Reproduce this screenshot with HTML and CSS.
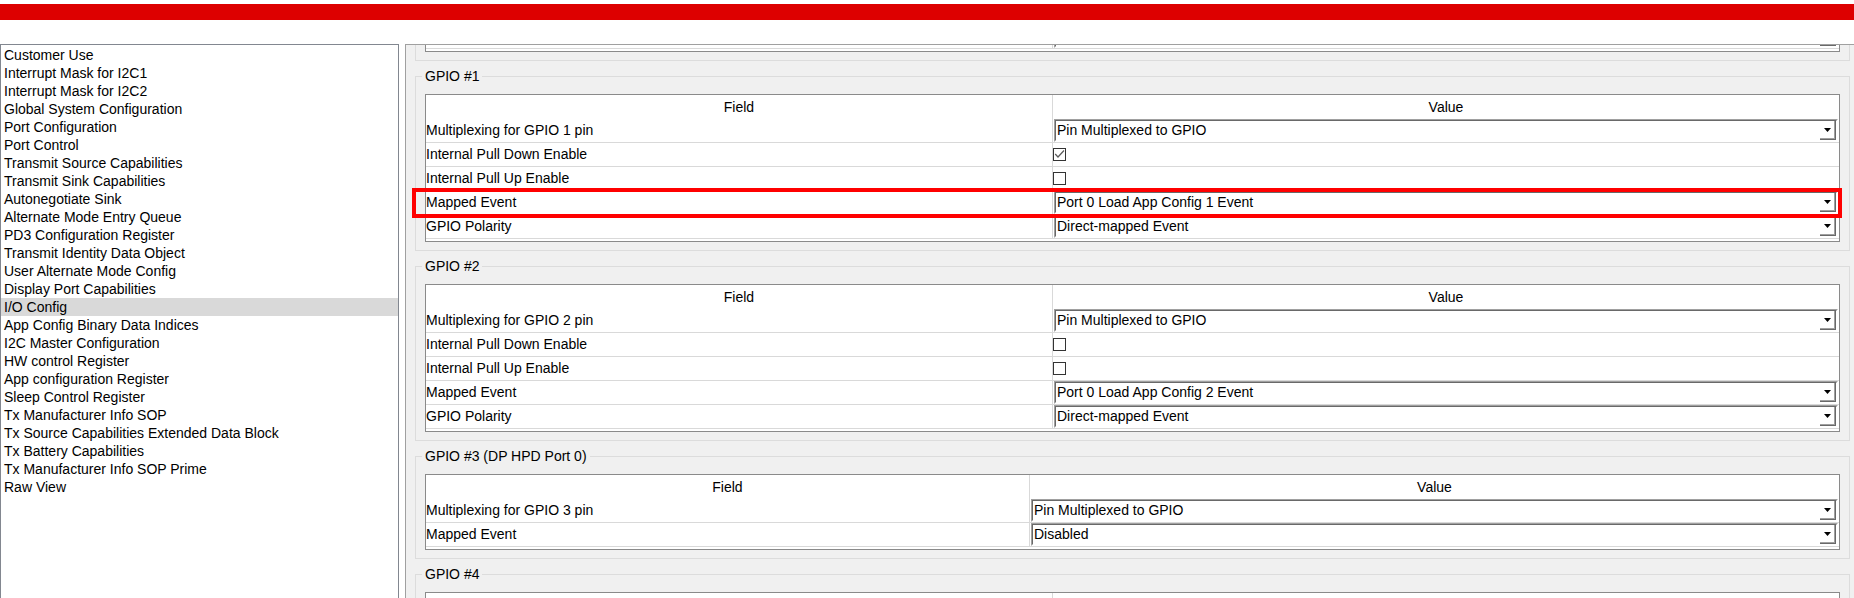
FILE: index.html
```html
<!DOCTYPE html>
<html>
<head>
<meta charset="utf-8">
<link rel="stylesheet" href="styles.css">
</head>
<body>
<div class="topbar"></div>
<div class="main">
  <div class="list">
    <div class="item">Customer Use</div>
    <div class="item">Interrupt Mask for I2C1</div>
    <div class="item">Interrupt Mask for I2C2</div>
    <div class="item">Global System Configuration</div>
    <div class="item">Port Configuration</div>
    <div class="item">Port Control</div>
    <div class="item">Transmit Source Capabilities</div>
    <div class="item">Transmit Sink Capabilities</div>
    <div class="item">Autonegotiate Sink</div>
    <div class="item">Alternate Mode Entry Queue</div>
    <div class="item">PD3 Configuration Register</div>
    <div class="item">Transmit Identity Data Object</div>
    <div class="item">User Alternate Mode Config</div>
    <div class="item">Display Port Capabilities</div>
    <div class="item selected">I/O Config</div>
    <div class="item">App Config Binary Data Indices</div>
    <div class="item">I2C Master Configuration</div>
    <div class="item">HW control Register</div>
    <div class="item">App configuration Register</div>
    <div class="item">Sleep Control Register</div>
    <div class="item">Tx Manufacturer Info SOP</div>
    <div class="item">Tx Source Capabilities Extended Data Block</div>
    <div class="item">Tx Battery Capabilities</div>
    <div class="item">Tx Manufacturer Info SOP Prime</div>
    <div class="item">Raw View</div>
  </div>
  <div class="panel">
    <div class="scroller">

      <div class="group partial">
        <div class="table">
          <div class="row"><div class="fcell"></div><div class="vcell"><div class="combo"><div class="combo-in"><span class="combo-text"></span><span class="combo-btn"><svg width="7" height="4" viewBox="0 0 7 4"><path d="M0 0H7L3.5 4Z" fill="#000"/></svg></span></div></div></div></div>
        </div>
      </div>

      <div class="group">
        <span class="legend">GPIO #1</span>
        <div class="table">
          <div class="row head"><div class="fcell">Field</div><div class="vcell">Value</div></div>
          <div class="row"><div class="fcell">Multiplexing for GPIO 1 pin</div><div class="vcell"><div class="combo"><div class="combo-in"><span class="combo-text">Pin Multiplexed to GPIO</span><span class="combo-btn"><svg width="7" height="4" viewBox="0 0 7 4"><path d="M0 0H7L3.5 4Z" fill="#000"/></svg></span></div></div></div></div>
          <div class="row"><div class="fcell">Internal Pull Down Enable</div><div class="vcell"><div class="check"><svg width="11" height="11" viewBox="0 0 11 11"><path d="M1.2 5 L4 8 L10 1.5" fill="none" stroke="#5a5a5a" stroke-width="1.2"/></svg></div></div></div>
          <div class="row"><div class="fcell">Internal Pull Up Enable</div><div class="vcell"><div class="check"></div></div></div>
          <div class="row"><div class="fcell">Mapped Event</div><div class="vcell"><div class="combo"><div class="combo-in"><span class="combo-text">Port 0 Load App Config 1 Event</span><span class="combo-btn"><svg width="7" height="4" viewBox="0 0 7 4"><path d="M0 0H7L3.5 4Z" fill="#000"/></svg></span></div></div></div><div class="highlight"></div></div>
          <div class="row"><div class="fcell">GPIO Polarity</div><div class="vcell"><div class="combo"><div class="combo-in"><span class="combo-text">Direct-mapped Event</span><span class="combo-btn"><svg width="7" height="4" viewBox="0 0 7 4"><path d="M0 0H7L3.5 4Z" fill="#000"/></svg></span></div></div></div></div>
        </div>
      </div>

      <div class="group">
        <span class="legend">GPIO #2</span>
        <div class="table">
          <div class="row head"><div class="fcell">Field</div><div class="vcell">Value</div></div>
          <div class="row"><div class="fcell">Multiplexing for GPIO 2 pin</div><div class="vcell"><div class="combo"><div class="combo-in"><span class="combo-text">Pin Multiplexed to GPIO</span><span class="combo-btn"><svg width="7" height="4" viewBox="0 0 7 4"><path d="M0 0H7L3.5 4Z" fill="#000"/></svg></span></div></div></div></div>
          <div class="row"><div class="fcell">Internal Pull Down Enable</div><div class="vcell"><div class="check"></div></div></div>
          <div class="row"><div class="fcell">Internal Pull Up Enable</div><div class="vcell"><div class="check"></div></div></div>
          <div class="row"><div class="fcell">Mapped Event</div><div class="vcell"><div class="combo"><div class="combo-in"><span class="combo-text">Port 0 Load App Config 2 Event</span><span class="combo-btn"><svg width="7" height="4" viewBox="0 0 7 4"><path d="M0 0H7L3.5 4Z" fill="#000"/></svg></span></div></div></div></div>
          <div class="row"><div class="fcell">GPIO Polarity</div><div class="vcell"><div class="combo"><div class="combo-in"><span class="combo-text">Direct-mapped Event</span><span class="combo-btn"><svg width="7" height="4" viewBox="0 0 7 4"><path d="M0 0H7L3.5 4Z" fill="#000"/></svg></span></div></div></div></div>
        </div>
      </div>

      <div class="group">
        <span class="legend">GPIO #3 (DP HPD Port 0)</span>
        <div class="table narrow">
          <div class="row head"><div class="fcell">Field</div><div class="vcell">Value</div></div>
          <div class="row"><div class="fcell">Multiplexing for GPIO 3 pin</div><div class="vcell"><div class="combo"><div class="combo-in"><span class="combo-text">Pin Multiplexed to GPIO</span><span class="combo-btn"><svg width="7" height="4" viewBox="0 0 7 4"><path d="M0 0H7L3.5 4Z" fill="#000"/></svg></span></div></div></div></div>
          <div class="row"><div class="fcell">Mapped Event</div><div class="vcell"><div class="combo"><div class="combo-in"><span class="combo-text">Disabled</span><span class="combo-btn"><svg width="7" height="4" viewBox="0 0 7 4"><path d="M0 0H7L3.5 4Z" fill="#000"/></svg></span></div></div></div></div>
        </div>
      </div>

      <div class="group">
        <span class="legend">GPIO #4</span>
        <div class="table">
          <div class="row head"><div class="fcell"></div><div class="vcell"></div></div>
        </div>
      </div>

    </div>
  </div>
</div>
</body>
</html>
```
FILE: styles.css
```css
html, body {
  margin: 0;
  padding: 0;
  background: #ffffff;
}
body {
  width: 1854px;
  height: 598px;
  overflow: hidden;
  font-family: "Liberation Sans", Arial, sans-serif;
  font-size: 14px;
  color: #000;
}
.topbar {
  height: 16px;
  margin-top: 4px;
  margin-bottom: 24px;
  background: #dd0000;
}
.main {
  display: flex;
  height: 554px;
  overflow: hidden;
}
.list {
  width: 399px;
  flex: none;
  box-sizing: border-box;
  border: 1px solid #828790;
  border-bottom: none;
  padding-top: 1px;
  background: #fff;
}
.item {
  height: 18px;
  line-height: 18px;
  padding-left: 3px;
  white-space: nowrap;
}
.item.selected {
  background: #d9d9d9;
}
.panel {
  flex: 1;
  margin-left: 6px;
  border-left: 1px solid #a0a0a0;
  border-top: 1px solid #a0a0a0;
  background: #f0f0f0;
  overflow: hidden;
}
.scroller {
  padding-left: 9px;
  padding-right: 4px;
}
.group {
  position: relative;
  border: 1px solid #dcdcdc;
  padding: 17px 9px 8px 9px;
  margin-bottom: 15px;
}
.group.partial {
  margin-top: -39px;
}
.legend {
  position: absolute;
  top: -9px;
  left: 6px;
  padding: 0 3px;
  line-height: 16px;
  background: #f0f0f0;
  white-space: nowrap;
}
.table {
  border: 1px solid #8a8a8a;
  background: #fff;
  padding-bottom: 2px;
}
.row {
  position: relative;
  display: flex;
  height: 24px;
  box-sizing: border-box;
  border-bottom: 1px solid #d9d9d9;
  line-height: 23px;
}
.row.head {
  border-bottom: none;
  line-height: 24px;
  text-align: center;
}
.fcell {
  width: 626px;
  flex: none;
  white-space: nowrap;
  overflow: hidden;
}
.table.narrow .fcell {
  width: 603px;
}
.vcell {
  flex: 1;
  min-width: 0;
  border-left: 1px solid #d9d9d9;
}
.combo {
  height: 23px;
  margin: 0 1px;
  box-sizing: border-box;
  border-top: 1px solid #a0a0a0;
  border-left: 1px solid #a0a0a0;
  border-right: 1px solid #fff;
  border-bottom: 1px solid #fff;
  background: #fff;
}
.combo-in {
  display: flex;
  height: 100%;
  box-sizing: border-box;
  border-top: 1px solid #696969;
  border-left: 1px solid #696969;
  border-right: 1px solid #fff;
  border-bottom: 1px solid #fff;
}
.combo-text {
  flex: 1;
  padding-left: 1px;
  line-height: 19px;
  white-space: nowrap;
  overflow: hidden;
}
.combo-btn {
  width: 16px;
  flex: none;
  box-sizing: border-box;
  border-right: 1px solid #696969;
  border-bottom: 1px solid #696969;
  box-shadow: inset -1px -1px 0 #a0a0a0;
  display: flex;
  align-items: center;
  justify-content: center;
  background: #fff;
}
.combo-btn svg {
  display: block;
}
.check {
  width: 13px;
  height: 13px;
  box-sizing: border-box;
  margin-top: 5px;
  border: 1px solid #333;
  background: #fff;
}
.check svg {
  display: block;
}
.highlight {
  position: absolute;
  top: -3px;
  bottom: -4px;
  left: -14px;
  right: -3px;
  border: 4px solid #ff0000;
  pointer-events: none;
  z-index: 2;
}
```
